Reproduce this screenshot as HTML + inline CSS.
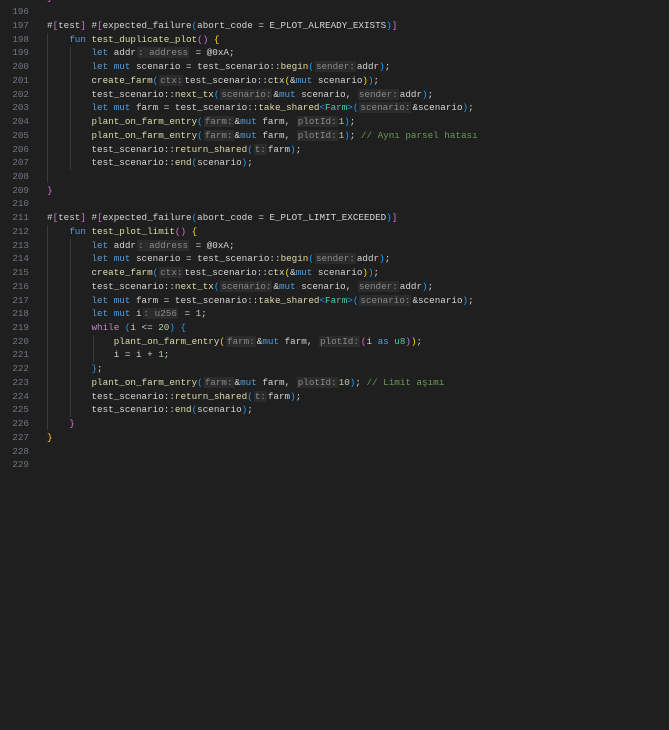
<!DOCTYPE html>
<html><head><meta charset="utf-8"><style>
body{margin:0;background:#1f1f1f;width:669px;height:730px;overflow:hidden;position:relative;font-family:"Liberation Mono",monospace;font-size:9.27px;color:#d4d4d4}
.l{position:absolute;left:0;height:13.73px;line-height:13.73px;white-space:pre;width:669px}
.n{position:absolute;left:0;width:29px;text-align:right;color:#6e7681}
.c{position:absolute;left:47px}
.k{color:#569cd6}.p{color:#c586c0}.f{color:#dcdcaa}.t{color:#4ec9b0}.num{color:#b5cea8}.cm{color:#6a9955}
.y{color:#ffd700}.m{color:#da70d6}.b{color:#179fff}
.h{background:#2b2b2b;color:#8a8a8a;padding:0 1px;margin:0 1px}
.g{position:absolute;width:1px;background:#3a3a3a}
</style></head><body>
<div class="g" style="left:47px;top:33px;height:150px"></div>
<div class="g" style="left:70px;top:47px;height:123px"></div>
<div class="g" style="left:47px;top:225px;height:205px"></div>
<div class="g" style="left:70px;top:239px;height:178px"></div>
<div class="g" style="left:93px;top:335px;height:27px"></div>

<div class="l" style="top:-8.53px"><span class="c"><span class="m">}</span></span></div>
<div class="l" style="top:5.20px"><span class="n">196</span></div>
<div class="l" style="top:18.93px"><span class="n">197</span><span class="c">#<span class="m">[</span>test<span class="m">]</span> #<span class="m">[</span>expected_failure<span class="b">(</span>abort_code = E_PLOT_ALREADY_EXISTS<span class="b">)</span><span class="m">]</span></span></div>
<div class="l" style="top:32.66px"><span class="n">198</span><span class="c">    <span class="k">fun</span> <span class="f">test_duplicate_plot</span><span class="m">()</span> <span class="y">{</span></span></div>
<div class="l" style="top:46.39px"><span class="n">199</span><span class="c">        <span class="k">let</span> addr<span class="h">: address</span> = @0xA;</span></div>
<div class="l" style="top:60.12px"><span class="n">200</span><span class="c">        <span class="k">let mut</span> scenario = test_scenario::<span class="f">begin</span><span class="b">(</span><span class="h">sender:</span>addr<span class="b">)</span>;</span></div>
<div class="l" style="top:73.85px"><span class="n">201</span><span class="c">        <span class="f">create_farm</span><span class="b">(</span><span class="h">ctx:</span>test_scenario::<span class="f">ctx</span><span class="y">(</span>&amp;<span class="k">mut</span> scenario<span class="y">)</span><span class="b">)</span>;</span></div>
<div class="l" style="top:87.58px"><span class="n">202</span><span class="c">        test_scenario::<span class="f">next_tx</span><span class="b">(</span><span class="h">scenario:</span>&amp;<span class="k">mut</span> scenario, <span class="h">sender:</span>addr<span class="b">)</span>;</span></div>
<div class="l" style="top:101.31px"><span class="n">203</span><span class="c">        <span class="k">let mut</span> farm = test_scenario::<span class="f">take_shared</span><span class="b">&lt;</span><span class="t">Farm</span><span class="b">&gt;(</span><span class="h">scenario:</span>&amp;scenario<span class="b">)</span>;</span></div>
<div class="l" style="top:115.04px"><span class="n">204</span><span class="c">        <span class="f">plant_on_farm_entry</span><span class="b">(</span><span class="h">farm:</span>&amp;<span class="k">mut</span> farm, <span class="h">plotId:</span><span class="num">1</span><span class="b">)</span>;</span></div>
<div class="l" style="top:128.77px"><span class="n">205</span><span class="c">        <span class="f">plant_on_farm_entry</span><span class="b">(</span><span class="h">farm:</span>&amp;<span class="k">mut</span> farm, <span class="h">plotId:</span><span class="num">1</span><span class="b">)</span>; <span class="cm">// Aynı parsel hatası</span></span></div>
<div class="l" style="top:142.50px"><span class="n">206</span><span class="c">        test_scenario::<span class="f">return_shared</span><span class="b">(</span><span class="h">t:</span>farm<span class="b">)</span>;</span></div>
<div class="l" style="top:156.23px"><span class="n">207</span><span class="c">        test_scenario::<span class="f">end</span><span class="b">(</span>scenario<span class="b">)</span>;</span></div>
<div class="l" style="top:169.96px"><span class="n">208</span></div>
<div class="l" style="top:183.69px"><span class="n">209</span><span class="c"><span class="m">}</span></span></div>
<div class="l" style="top:197.42px"><span class="n">210</span></div>
<div class="l" style="top:211.15px"><span class="n">211</span><span class="c">#<span class="m">[</span>test<span class="m">]</span> #<span class="m">[</span>expected_failure<span class="b">(</span>abort_code = E_PLOT_LIMIT_EXCEEDED<span class="b">)</span><span class="m">]</span></span></div>
<div class="l" style="top:224.88px"><span class="n">212</span><span class="c">    <span class="k">fun</span> <span class="f">test_plot_limit</span><span class="m">()</span> <span class="y">{</span></span></div>
<div class="l" style="top:238.61px"><span class="n">213</span><span class="c">        <span class="k">let</span> addr<span class="h">: address</span> = @0xA;</span></div>
<div class="l" style="top:252.34px"><span class="n">214</span><span class="c">        <span class="k">let mut</span> scenario = test_scenario::<span class="f">begin</span><span class="b">(</span><span class="h">sender:</span>addr<span class="b">)</span>;</span></div>
<div class="l" style="top:266.07px"><span class="n">215</span><span class="c">        <span class="f">create_farm</span><span class="b">(</span><span class="h">ctx:</span>test_scenario::<span class="f">ctx</span><span class="y">(</span>&amp;<span class="k">mut</span> scenario<span class="y">)</span><span class="b">)</span>;</span></div>
<div class="l" style="top:279.80px"><span class="n">216</span><span class="c">        test_scenario::<span class="f">next_tx</span><span class="b">(</span><span class="h">scenario:</span>&amp;<span class="k">mut</span> scenario, <span class="h">sender:</span>addr<span class="b">)</span>;</span></div>
<div class="l" style="top:293.53px"><span class="n">217</span><span class="c">        <span class="k">let mut</span> farm = test_scenario::<span class="f">take_shared</span><span class="b">&lt;</span><span class="t">Farm</span><span class="b">&gt;(</span><span class="h">scenario:</span>&amp;scenario<span class="b">)</span>;</span></div>
<div class="l" style="top:307.26px"><span class="n">218</span><span class="c">        <span class="k">let mut</span> i<span class="h">: u256</span> = <span class="num">1</span>;</span></div>
<div class="l" style="top:320.99px"><span class="n">219</span><span class="c">        <span class="p">while</span> <span class="b">(</span>i &lt;= <span class="num">20</span><span class="b">)</span> <span class="b">{</span></span></div>
<div class="l" style="top:334.72px"><span class="n">220</span><span class="c">            <span class="f">plant_on_farm_entry</span><span class="y">(</span><span class="h">farm:</span>&amp;<span class="k">mut</span> farm, <span class="h">plotId:</span><span class="m">(</span>i <span class="k">as</span> <span class="t">u8</span><span class="m">)</span><span class="y">)</span>;</span></div>
<div class="l" style="top:348.45px"><span class="n">221</span><span class="c">            i = i + <span class="num">1</span>;</span></div>
<div class="l" style="top:362.18px"><span class="n">222</span><span class="c">        <span class="b">}</span>;</span></div>
<div class="l" style="top:375.91px"><span class="n">223</span><span class="c">        <span class="f">plant_on_farm_entry</span><span class="b">(</span><span class="h">farm:</span>&amp;<span class="k">mut</span> farm, <span class="h">plotId:</span><span class="num">10</span><span class="b">)</span>; <span class="cm">// Limit aşımı</span></span></div>
<div class="l" style="top:389.64px"><span class="n">224</span><span class="c">        test_scenario::<span class="f">return_shared</span><span class="b">(</span><span class="h">t:</span>farm<span class="b">)</span>;</span></div>
<div class="l" style="top:403.37px"><span class="n">225</span><span class="c">        test_scenario::<span class="f">end</span><span class="b">(</span>scenario<span class="b">)</span>;</span></div>
<div class="l" style="top:417.10px"><span class="n">226</span><span class="c">    <span class="m">}</span></span></div>
<div class="l" style="top:430.83px"><span class="n">227</span><span class="c"><span class="y">}</span></span></div>
<div class="l" style="top:444.56px"><span class="n">228</span></div>
<div class="l" style="top:458.29px"><span class="n">229</span></div>
</body></html>
